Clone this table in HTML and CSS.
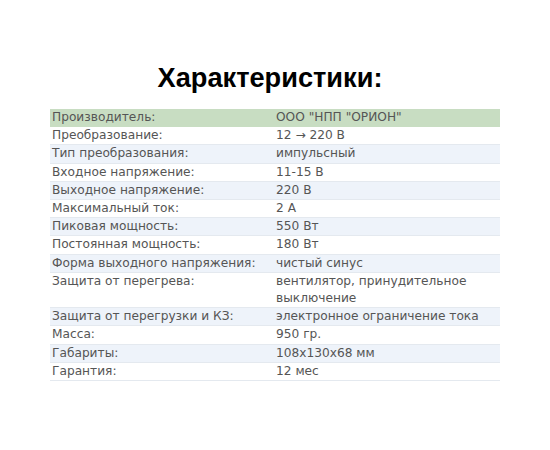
FILE: index.html
```html
<!DOCTYPE html>
<html lang="ru">
<head>
<meta charset="utf-8">
<link rel="stylesheet" href="styles.css">
</head>
<body>
<div class="page">
  <h1 class="title">Характеристики:</h1>
  <table class="specs">
    <tr class="head"><td>Производитель:</td><td>ООО "НПП "ОРИОН"</td></tr>
    <tr><td>Преобразование:</td><td>12 → 220 В</td></tr>
    <tr class="alt"><td>Тип преобразования:</td><td>импульсный</td></tr>
    <tr><td>Входное напряжение:</td><td>11-15 В</td></tr>
    <tr class="alt"><td>Выходное напряжение:</td><td>220 В</td></tr>
    <tr><td>Максимальный ток:</td><td>2 А</td></tr>
    <tr class="alt"><td>Пиковая мощность:</td><td>550 Вт</td></tr>
    <tr><td>Постоянная мощность:</td><td>180 Вт</td></tr>
    <tr class="alt"><td>Форма выходного напряжения:</td><td>чистый синус</td></tr>
    <tr><td>Защита от перегрева:</td><td>вентилятор, принудительное выключение</td></tr>
    <tr class="alt"><td>Защита от перегрузки и КЗ:</td><td>электронное ограничение тока</td></tr>
    <tr><td>Масса:</td><td>950 гр.</td></tr>
    <tr class="alt"><td>Габариты:</td><td>108x130x68 мм</td></tr>
    <tr><td>Гарантия:</td><td>12 мес</td></tr>
  </table>
</div>
</body>
</html>
```
FILE: styles.css
```css
html, body {
  margin: 0;
  padding: 0;
  background: #ffffff;
}
.page {
  width: 450px;
  margin-left: 50px;
  padding-top: 60px;
}
.title {
  margin: 0 0 14px 0;
  text-align: center;
  font-family: "Liberation Sans", Arial, sans-serif;
  font-weight: bold;
  font-size: 27.2px;
  line-height: 35px;
  color: #000;
  padding-right: 10px;
}
.specs {
  width: 450px;
  border-collapse: collapse;
  font-family: "DejaVu Sans", Verdana, sans-serif;
  font-size: 12.2px;
  color: #555555;
}
.specs td {
  padding: 0 3px 0 2px;
  line-height: 17.2px;
  vertical-align: top;
  border-bottom: 1px solid #e4e9ef;
}
.specs td:first-child {
  width: 217px;
}
.specs td:last-child {
  padding-left: 4px;
}
.specs tr.head td {
  background: #c8ddc2;
  border-bottom-color: #c8ddc2;
}
.specs tr.alt td {
  background: #eef3fa;
}
```
